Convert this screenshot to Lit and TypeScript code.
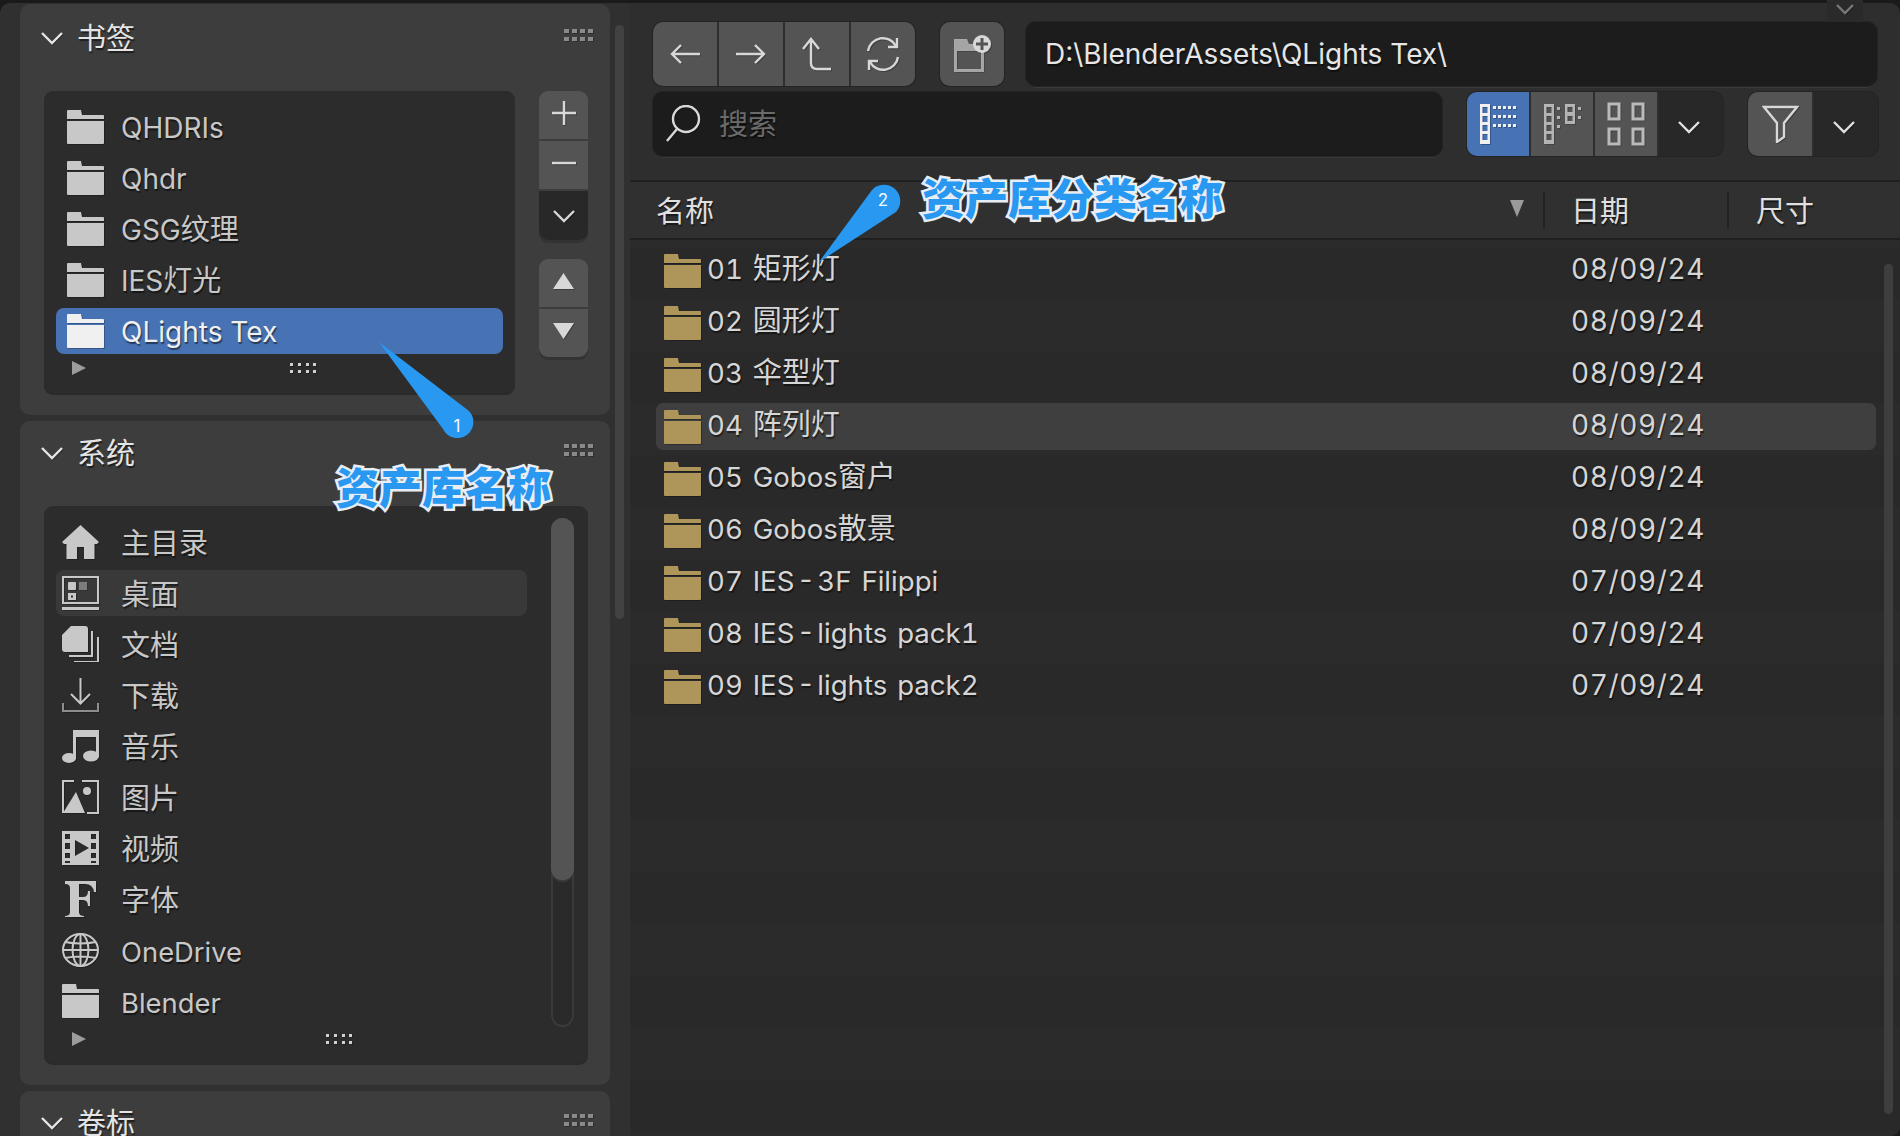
import {customElement} from "lit/decorators.js";
import {css, html, LitElement, svg} from "lit";

const icon = (w: number, h: number, body: unknown, cls = "") => html`
  <svg class="icon ${cls}" width="${w}" height="${h}" viewBox="0 0 ${w} ${h}">${body}</svg>`;

const folder = () => icon(37, 34, svg`
  <path d="M0 1q0-1 1-1h13l1 5h21q1 0 1 1v3H0z"/>
  <path d="M0 11h37v22q0 1-1 1H1q-1 0-1-1z"/>`);

const chevron = (w = 24, h = 14, cls = "") => icon(w, h, svg`
  <path d="M2 2L${w / 2} ${h - 2}L${w - 2} 2" fill="none" stroke="currentColor" stroke-width="2.4"/>`, cls);

const grip = () => icon(30, 12, svg`
  ${[0, 8, 16, 24].map(x => [0, 8].map(y => svg`<rect x="${x}" y="${y}" width="5" height="4"/>`))}`, "grip");

const miniGrip = () => icon(26, 10, svg`
  ${[0, 8, 16, 23].map(x => [0, 7].map(y => svg`<rect x="${x}" y="${y}" width="3" height="3"/>`))}`);

const line = (d: string, w = 36, h = 36, sw = 2.4) => icon(w, h, svg`
  <path d="${d}" fill="none" stroke="currentColor" stroke-width="${sw}"/>`);

// the CJK glyphs sit a little larger than the latin ones in the source font
const mixed = (text: string) => text.split(/([\u4e00-\u9fff]+)/).map((part, i) =>
  i % 2 ? html`<span class="cjk">${part}</span>` : part);

const systemIcons: Record<string, () => unknown> = {
  home: () => icon(37, 34, svg`
    <path d="M18.500 0L37 17l-2 2h-2.500v15H22V22h-7v12H4.500V19H2L0 17z"/>`),
  desktop: () => icon(37, 34, svg`
    <path d="M1 1h35v26H1z" fill="none" stroke="currentColor" stroke-width="2"/>
    <rect x="0" y="31" width="37" height="3"/>
    <rect x="6" y="6" width="8" height="8" rx="1"/>
    <rect x="17" y="6" width="8" height="8" opacity=".5"/>
    <path d="M6 17h8v7H6z M9 19.500v2h2v-2z" fill-rule="evenodd"/>`),
  docs: () => icon(37, 36, svg`
    <path d="M9 0h14q3 0 3 3v23H3q-3 0-3-3V9z"/>
    <path d="M30 5v25H7M36 11v25H12" fill="none" stroke="currentColor" stroke-width="2"/>`),
  download: () => icon(37, 34, svg`
    <path d="M18.500 0v24M9 16l9.500 9.500L28 16" fill="none" stroke="currentColor" stroke-width="2"/>
    <path d="M1 25v8h35v-8" fill="none" stroke="#8d8d8d" stroke-width="2"/>`),
  music: () => icon(37, 34, svg`
    <path d="M11 1h26v27h-3V8H14v22h-3z"/>
    <ellipse cx="7" cy="29" rx="7" ry="5"/>
    <ellipse cx="29" cy="27" rx="8" ry="5.500"/>`),
  image: () => icon(37, 34, svg`
    <path d="M12 1H1v32M25 33h11V1H20" fill="none" stroke="currentColor" stroke-width="2"/>
    <path d="M1 33L14 12l9 21z"/>
    <circle cx="25" cy="11" r="4"/>`),
  video: () => icon(37, 34, svg`
    <path fill-rule="evenodd" d="M0 0h37v34H0z M3 3v5h5V3z M3 12v6h5v-6z M3 22v5h5v-5z M29 3v5h5V3z M29 12v6h5v-6z M29 22v5h5v-5z M13 9v16l14-8z"/>
    <path d="M3 31h5M29 31h5" stroke="#2c2c2c" stroke-width="2"/>`),
  font: () => icon(37, 36, svg`
    <path d="M3 0h31v11h-2q-1-8-9-8h-6v13h4q5 0 5-6h2v15h-2q0-6-5-6h-4v12q0 4 5 4v2H3v-2q5 0 5-4V7q0-4-5-4z"/>`),
  globe: () => icon(37, 34, svg`
    <g fill="none" stroke="currentColor" stroke-width="2">
      <ellipse cx="18.500" cy="17" rx="17.500" ry="16"/>
      <ellipse cx="18.500" cy="17" rx="8" ry="16"/>
      <path d="M18.500 1v32M1 17h35M3 9q15 3 31 0M3 25q15-3 31 0"/>
    </g>`),
  folder
};

const bookmarks = ["QHDRIs", "Qhdr", "GSG纹理", "IES灯光", "QLights Tex"];

const places = [
  {name: "主目录", icon: "home"},
  {name: "桌面", icon: "desktop", hover: true},
  {name: "文档", icon: "docs"},
  {name: "下载", icon: "download"},
  {name: "音乐", icon: "music"},
  {name: "图片", icon: "image"},
  {name: "视频", icon: "video"},
  {name: "字体", icon: "font"},
  {name: "OneDrive", icon: "globe"},
  {name: "Blender", icon: "folder"}
];

const files = [
  {name: "01 矩形灯", date: "08/09/24"},
  {name: "02 圆形灯", date: "08/09/24"},
  {name: "03 伞型灯", date: "08/09/24"},
  {name: "04 阵列灯", date: "08/09/24", active: true},
  {name: "05 Gobos窗户", date: "08/09/24"},
  {name: "06 Gobos散景", date: "08/09/24"},
  {name: "07 IES\u200a-\u200a3F Filippi", date: "07/09/24"},
  {name: "08 IES\u200a-\u200alights pack1", date: "07/09/24"},
  {name: "09 IES\u200a-\u200alights pack2", date: "07/09/24"}
];

@customElement("app-root")
export class AppRoot extends LitElement {

  //language=css
  static styles = css`
    * {
      box-sizing: border-box;
    }

    :host {
      display: flex;
      position: relative;
      width: 1900px;
      height: 1136px;
      overflow: hidden;
      background: #1a1a1a;
      color: #c8c8c8;
      font-family: Inter, "Noto Sans CJK SC", sans-serif;
      font-size: 28px;
      line-height: 34px;
      text-shadow: 1px 2px 1px #00000080;
    }

    .cjk {
      font-size: 29px;
    }

    .icon {
      display: block;
      flex: none;
      fill: currentColor;
      filter: drop-shadow(1px 1px 0 #00000040);
    }

    .sidebar {
      display: flex;
      width: 630px;
      margin-top: 3px;
      padding: 1px 6px 0 20px;
      background: #303030;
      border-top-left-radius: 10px;
      gap: 5px;
      flex: none;
    }

    .panels {
      display: flex;
      flex-direction: column;
      gap: 6px;
      width: 590px;
      flex: none;
    }

    .side-thumb {
      width: 9px;
      height: 594px;
      margin-top: 21px;
      border-radius: 5px;
      background: #424242;
    }

    .panel {
      flex: none;
      padding: 0 22px 22px 24px;
      background: #3d3d3d;
      border-radius: 10px;
    }

    .panel-last {
      flex: 1;
      border-radius: 10px 10px 0 0;
    }

    .panel-head {
      display: flex;
      align-items: center;
      height: 68px;
      margin-bottom: 19px;
      color: #e4e4e4;
      font-size: 29px;
    }

    .head-short {
      height: 64px;
      margin-bottom: 21px;
    }

    .head-last {
      height: 64px;
    }

    .panel-head .icon:first-child {
      margin-left: -4px;
    }

    .panel-head span {
      margin: 2px 0 0 13px;
      flex: 1;
    }

    .panel-head .grip {
      color: #8a8a8a;
      margin: -6px -6px 0 0;
    }

    .bookmarks {
      display: flex;
      gap: 24px;
    }

    .list {
      flex: none;
      background: #2c2c2c;
      border-radius: 9px;
      box-shadow: 0 2px 0 #2a2a2a;
      padding: 13px 12px 0;
    }

    .list-short {
      width: 471px;
      height: 302px;
    }

    .list-full {
      display: grid;
      grid-template-columns: 471px 23px;
      gap: 24px;
      width: 544px;
      height: 557px;
    }

    .rows {
      display: flex;
      flex-direction: column;
      gap: 5px;
    }

    .row {
      display: flex;
      align-items: center;
      height: 46px;
      padding: 0 11px;
      border-radius: 8px;
      white-space: nowrap;
    }

    .row .name {
      margin: 2px 0 0 17px;
    }

    .place {
      padding: 0 6px;
      font-size: 27.4px;
    }

    .place .name {
      margin-left: 22px;
      margin-top: 3px;
    }

    .row.selected {
      background: #4772b3;
      color: #f0f0f0;
    }

    .row.hover {
      background: #393939;
    }

    .list-foot {
      display: flex;
      align-items: center;
      height: 24px;
      color: #d0d0d0;
      padding-left: 16px;
    }

    .list-foot .tri {
      width: 0;
      height: 0;
      border-left: 14px solid #9c9c9c;
      border-top: 7px solid transparent;
      border-bottom: 7px solid transparent;
    }

    .foot-short {
      gap: 204px;
      margin-top: 2px;
    }

    .foot-full {
      gap: 240px;
      margin-top: 3px;
    }

    .track {
      height: 509px;
      margin-top: -1px;
      border-radius: 12px;
      background: #2a2a2a;
      box-shadow: inset 0 0 0 2px #3a3a3a;
    }

    .thumb {
      height: 362px;
      border-radius: 12px;
      background: #545454;
      box-shadow: 0 2px 0 #3a3a3a;
    }

    .side-buttons {
      display: flex;
      flex-direction: column;
      gap: 19px;
      width: 49px;
      flex: none;
    }

    .stack {
      display: flex;
      flex-direction: column;
      gap: 2px;
      border-radius: 9px;
      overflow: hidden;
      box-shadow: 0 3px 0 #333;
    }

    .stack div {
      display: flex;
      align-items: center;
      justify-content: center;
      height: 48px;
      background: #545454;
      color: #d8d8d8;
    }

    .stack div.dark {
      height: 49px;
      background: #282828;
      padding-top: 5px;
    }

    .stack .icon {
      transform: translateY(-2px);
    }

    .low {
      margin: 5px 4px 0 0;
    }

    .main {
      display: flex;
      flex-direction: column;
      flex: 1;
      margin-top: 3px;
      background: #2e2e2e;
      border-radius: 0 10px 10px 0;
      overflow: hidden;
    }

    .top {
      display: flex;
      flex-direction: column;
      gap: 6px;
      height: 177px;
      padding: 19px 23px 0 23px;
      flex: none;
    }

    .bar {
      display: flex;
      gap: 25px;
      height: 64px;
      flex: none;
    }

    .group {
      display: flex;
      gap: 2px;
      height: 64px;
      flex: none;
      border-radius: 10px;
      overflow: hidden;
      box-shadow: 0 0 0 1px #242424;
    }

    .btn {
      display: flex;
      align-items: center;
      justify-content: center;
      width: 64px;
      background: #545454;
      color: #d8d8d8;
      flex: none;
    }

    .view .btn {
      width: 62px;
    }

    .btn.on {
      background: #4772b3;
      color: #f0f0f0;
    }

    .btn.dark,
    .view .btn.dark {
      width: 64px;
      background: #282828;
      color: #e0e0e0;
    }

    .field {
      display: flex;
      align-items: center;
      height: 64px;
      background: #1c1c1c;
      border-radius: 10px;
      box-shadow: 0 0 0 1px #242424, 0 2px 0 #3a3a3a;
    }

    .path {
      flex: 1;
      margin-left: -3px;
      padding-left: 19px;
      color: #e6e6e6;
    }

    .search {
      width: 789px;
      flex: none;
      padding-left: 12px;
      color: #6a6a6a;
      font-size: 29px;
    }

    .search span {
      margin-top: 2px;
    }

    .search .icon {
      color: #d8d8d8;
      margin-right: 18px;
    }

    .collapse {
      position: absolute;
      top: 0;
      left: 1827px;
      display: flex;
      justify-content: center;
      width: 36px;
      height: 22px;
      padding-top: 3px;
      color: #777;
      background: #2a2a2a;
    }

    .cols {
      display: grid;
      grid-template-columns: 915px 184px 1fr;
      align-items: center;
      height: 60px;
      padding-bottom: 1px;
      background: #303030;
      border-top: 2px solid #1f1f1f;
      border-bottom: 2px solid #1f1f1f;
      color: #e0e0e0;
      font-size: 29px;
      flex: none;
    }

    .col {
      display: flex;
      align-items: center;
      height: 36px;
      padding-left: 26px;
      border-right: 2px solid #222;
    }

    .col:last-child {
      border-right: 0;
      padding-left: 27px;
    }

    .col span {
      flex: 1;
      margin-top: 4px;
    }

    .sort {
      width: 14px;
      height: 17px;
      margin: -2px 19px 0 0;
      background: #9a9a9a;
      clip-path: polygon(0 0, 100% 0, 50% 100%);
    }

    .browser {
      display: flex;
      flex: 1;
      padding: 7px 7px 0 26px;
      gap: 8px;
      background: repeating-linear-gradient(#292929 0 52px, #2b2b2b 52px 104px) 0 7px;
    }

    .files {
      display: flex;
      flex-direction: column;
      gap: 5px;
      flex: 1;
    }

    .file {
      display: grid;
      grid-template-columns: 915px 1fr;
      align-items: center;
      height: 47px;
      border-radius: 7px;
      color: #d6d6d6;
      font-variant-numeric: tabular-nums;
    }

    .file.active {
      background: #3f3f3f;
    }

    .file-name {
      display: flex;
      align-items: center;
      gap: 6px;
      padding-left: 8px;
      font-size: 27.6px;
      word-spacing: 2.5px;
      white-space: pre;
    }

    .file-name .icon {
      color: #ae965a;
    }

    .file-name > span,
    .date {
      margin-top: -3px;
    }

    .date {
      letter-spacing: 0.6px;
    }

    .vbar {
      width: 9px;
      height: 850px;
      margin-top: 17px;
      border-radius: 5px;
      background: #3e3e3e;
      flex: none;
    }

    .note {
      position: absolute;
      font-weight: 900;
      font-size: 43px;
      line-height: 1;
      color: #2898f0;
      -webkit-text-stroke: 5px #e8eef4;
      paint-order: stroke fill;
      text-shadow: none;
      white-space: nowrap;
    }

    .note-lib {
      left: 336px;
      top: 467px;
    }

    .note-cat {
      left: 922px;
      top: 178px;
    }

    .pin {
      position: absolute;
      overflow: visible;
      fill: #2898f0;
    }

    .pin-lib {
      left: 370px;
      top: 335px;
    }

    .pin-cat {
      left: 810px;
      top: 178px;
    }

    .pin-num {
      position: absolute;
      width: 32px;
      text-align: center;
      font-size: 17px;
      line-height: 32px;
      color: #f0f8ff;
      text-shadow: none;
    }

    .pin-num-lib {
      left: 441px;
      top: 410px;
    }

    .pin-num-cat {
      left: 867px;
      top: 184px;
    }
  `;

  render() {
    return html`
      <div class="sidebar">
        <div class="panels">
          <section class="panel">
            <div class="panel-head">${chevron()}<span>书签</span>${grip()}</div>
            <div class="bookmarks">
              <div class="list list-short">
                <div class="rows">
                  ${bookmarks.map((name, i) => html`
                    <div class="row ${i == 4 ? "selected" : ""}">${folder()}<span class="name">${mixed(name)}</span></div>
                  `)}
                </div>
                <div class="list-foot foot-short"><i class="tri"></i>${miniGrip()}</div>
              </div>
              <div class="side-buttons">
                <div class="stack">
                  <div>${line("M4 15h24M16 3v24", 32, 30, 2.4)}</div>
                  <div>${line("M4 3h24", 32, 6)}</div>
                  <div class="dark">${chevron(24, 14)}</div>
                </div>
                <div class="stack">
                  <div>${icon(21, 16, svg`<path d="M10.500 0L21 16H0z"/>`)}</div>
                  <div>${icon(21, 16, svg`<path d="M0 0h21L10.500 16z"/>`)}</div>
                </div>
              </div>
            </div>
          </section>
          <section class="panel">
            <div class="panel-head head-short">${chevron()}<span>系统</span>${grip()}</div>
            <div class="list list-full">
              <div>
                <div class="rows">
                  ${places.map(p => html`
                    <div class="row place ${p.hover ? "hover" : ""}">${systemIcons[p.icon]()}<span class="name">${mixed(p.name)}</span></div>
                  `)}
                </div>
                <div class="list-foot foot-full"><i class="tri"></i>${miniGrip()}</div>
              </div>
              <div class="track"><div class="thumb"></div></div>
            </div>
          </section>
          <section class="panel panel-last">
            <div class="panel-head head-last">${chevron()}<span>卷标</span>${grip()}</div>
          </section>
        </div>
        <div class="side-thumb"></div>
      </div>

      <div class="main">
        <div class="top">
          <div class="bar">
            <div class="group">
              <div class="btn">${line("M33 18H5M14 9l-9 9 9 9")}</div>
              <div class="btn">${line("M3 18h28M22 9l9 9-9 9")}</div>
              <div class="btn">${line("M4 13L12 3l8 10M12 3v24q0 6 6 6h14")}</div>
              <div class="btn">${line("M3 15a15 15 0 0 1 28-5M33 21a15 15 0 0 1-28 5M32 2v9h-9M4 34v-9h9")}</div>
            </div>
            <div class="group">
              <div class="btn">${icon(40, 38, svg`
                <path d="M2 4h13l2 5h15v28H2z M5 16v18h24V16z" fill-rule="evenodd" opacity=".65"/>
                <circle cx="30" cy="9" r="9"/>
                <path d="M30 3v12M24 9h12" stroke="#545454" stroke-width="3"/>`)}</div>
            </div>
            <div class="field path">D:\\BlenderAssets\\QLights Tex\\</div>
          </div>
          <div class="bar">
            <div class="field search">
              ${line("M2 36l10-12M34 14a13 13 0 1 1-26 0a13 13 0 1 1 26 0", 36, 38)}
              <span>搜索</span>
            </div>
            <div class="group view">
              <div class="btn on">${viewList()}</div>
              <div class="btn">${viewCompact()}</div>
              <div class="btn">${viewGrid()}</div>
              <div class="btn dark">${chevron(24, 14, "low")}</div>
            </div>
            <div class="group">
              <div class="btn">${line("M2 2h33L22 18v14l-7 5V18z", 37, 38)}</div>
              <div class="btn dark">${chevron(24, 14, "low")}</div>
            </div>
          </div>
        </div>

        <div class="cols">
          <div class="col"><span>名称</span><i class="sort"></i></div>
          <div class="col"><span>日期</span></div>
          <div class="col"><span>尺寸</span></div>
        </div>

        <div class="browser">
          <div class="files">
            ${files.map(f => html`
              <div class="file ${f.active ? "active" : ""}">
                <div class="file-name">${folder()}<span>${mixed(f.name)}</span></div>
                <div class="date">${f.date}</div>
              </div>
            `)}
          </div>
          <div class="vbar"></div>
        </div>
      </div>

      <div class="collapse">${chevron(20, 12)}</div>

      <svg class="pin pin-lib" width="110" height="110" viewBox="0 0 110 110">
        <path d="M9 7L99 76a16 16 0 1 1-26 18z"/>
      </svg>
      <div class="pin-num pin-num-lib">1</div>
      <svg class="pin pin-cat" width="100" height="100" viewBox="0 0 100 100">
        <path d="M9 84L62 12a16 16 0 1 1 24 22z"/>
      </svg>
      <div class="pin-num pin-num-cat">2</div>
      <div class="note note-lib">资产库名称</div>
      <div class="note note-cat">资产库分类名称</div>
    `;
  }
}

function viewList() {
  return icon(38, 42, svg`
    <path d="M1 1h10v40H1z M3.500 4v6h5V4z M3.500 13v6h5v-6z M3.500 22v6h5v-6z M3.500 31v6h5v-6z" fill-rule="evenodd"/>
    ${[3, 12, 21].map(y => [14, 19, 24, 29, 34].map(x => svg`<rect x="${x}" y="${y}" width="3" height="3"/>`))}`);
}

function viewCompact() {
  return icon(38, 42, svg`
    <g opacity=".75">
      <path d="M1 1h10v40H1z M3.500 4v6h5V4z M3.500 13v6h5v-6z M3.500 22v6h5v-6z M3.500 31v6h5v-6z" fill-rule="evenodd"/>
      <path d="M22 1h10v20H22z M24.500 4v5h5V4z M24.500 13v5h5v-5z" fill-rule="evenodd"/>
      ${[4, 13, 22].map(y => svg`<rect x="14" y="${y}" width="3" height="3"/>`)}
      ${[4, 13].map(y => svg`<rect x="35" y="${y}" width="3" height="3"/>`)}
    </g>`);
}

function viewGrid() {
  return icon(38, 44, svg`
    <g fill="none" stroke="currentColor" stroke-width="3" opacity=".8">
      <rect x="2" y="2" width="10" height="15"/>
      <rect x="26" y="2" width="10" height="15"/>
      <rect x="2" y="27" width="10" height="15"/>
      <rect x="26" y="27" width="10" height="15"/>
    </g>`);
}
